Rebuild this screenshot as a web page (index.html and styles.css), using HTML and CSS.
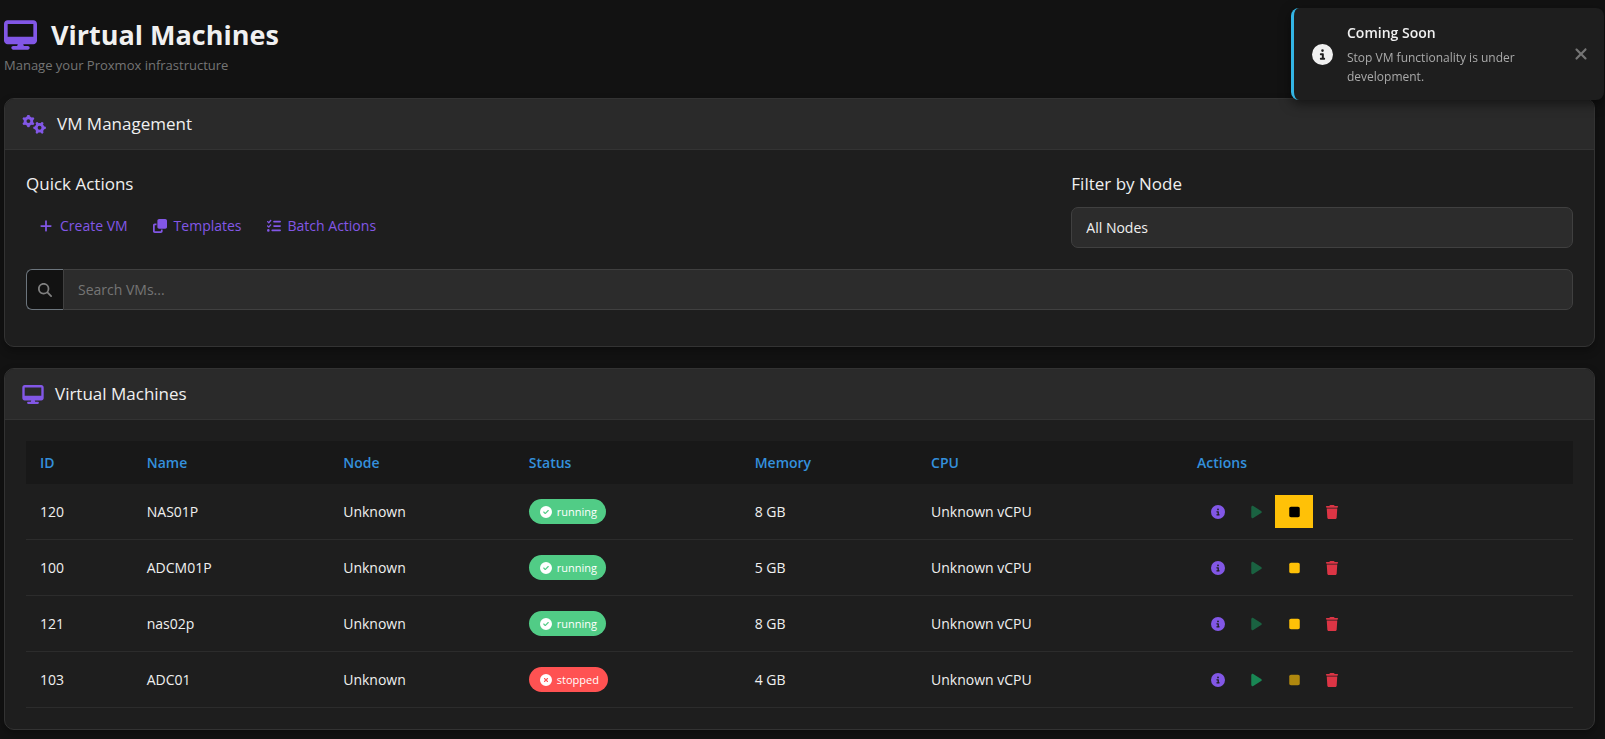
FILE: index.html
```html
<!DOCTYPE html>
<html lang="en">
<head>
<meta charset="utf-8">
<meta name="viewport" content="width=device-width, initial-scale=1">
<title>Virtual Machines</title>
<link rel="stylesheet" href="styles.css">
</head>
<body>
<svg class="sprite" aria-hidden="true">
  <symbol id="desktop" viewBox="0 0 576 512"><path d="M64 0C28.7 0 0 28.7 0 64V352c0 35.3 28.7 64 64 64H240l-10.7 32H160c-17.7 0-32 14.3-32 32s14.3 32 32 32H416c17.7 0 32-14.3 32-32s-14.3-32-32-32H346.7L336 416H512c35.3 0 64-28.7 64-64V64c0-35.3-28.7-64-64-64H64zM512 64V288H64V64H512z"/></symbol>
  <symbol id="gear" viewBox="-100 -100 200 200">
    <circle r="52" fill="none" stroke="currentColor" stroke-width="44"/>
    <g stroke="currentColor" stroke-width="42" stroke-linecap="round">
      <path d="M0-66V-78M0 66V78M57-33L68-39M-57 33L-68 39M57 33L68 39M-57-33L-68-39"/>
    </g>
  </symbol>
  <symbol id="gear-turned" viewBox="-100 -100 200 200">
    <circle r="52" fill="none" stroke="currentColor" stroke-width="44"/>
    <g stroke="currentColor" stroke-width="42" stroke-linecap="round">
      <path d="M-66 0H-78M66 0H78M-33 57L-39 68M33-57L39-68M33 57L39 68M-33-57L-39-68"/>
    </g>
  </symbol>
  <symbol id="gears" viewBox="0 0 640 512">
    <use href="#gear" x="-5" y="-10" width="350" height="350"/>
    <use href="#gear-turned" x="295" y="170" width="350" height="350"/>
  </symbol>
  <symbol id="info" viewBox="0 0 512 512"><path d="M256 512A256 256 0 1 0 256 0a256 256 0 1 0 0 512zM216 336h24V272H216c-13.3 0-24-10.7-24-24s10.7-24 24-24h48c13.3 0 24 10.7 24 24v88h8c13.3 0 24 10.7 24 24s-10.7 24-24 24H216c-13.3 0-24-10.7-24-24s10.7-24 24-24zm40-208a32 32 0 1 1 0 64 32 32 0 1 1 0-64z"/></symbol>
  <symbol id="check" viewBox="0 0 512 512"><path d="M256 512A256 256 0 1 0 256 0a256 256 0 1 0 0 512zM369 209L241 337c-9.4 9.4-24.6 9.4-33.9 0l-64-64c-9.4-9.4-9.4-24.6 0-33.9s24.6-9.4 33.9 0l47 47L335 175c9.4-9.4 24.6-9.4 33.9 0s9.4 24.6 0 33.9z"/></symbol>
  <symbol id="cross" viewBox="0 0 512 512"><path d="M256 512A256 256 0 1 0 256 0a256 256 0 1 0 0 512zM175 175c9.4-9.4 24.6-9.4 33.9 0l47 47 47-47c9.4-9.4 24.6-9.4 33.9 0s9.4 24.6 0 33.9l-47 47 47 47c9.4 9.4 9.4 24.6 0 33.9s-24.6 9.4-33.9 0l-47-47-47 47c-9.4 9.4-24.6 9.4-33.9 0s-9.4-24.6 0-33.9l47-47-47-47c-9.4-9.4-9.4-24.6 0-33.9z"/></symbol>
  <symbol id="play" viewBox="0 0 384 512"><path d="M73 39c-14.8-9.1-33.4-9.4-48.5-.9S0 62.6 0 80V432c0 17.4 9.4 33.4 24.5 41.9s33.7 8.1 48.5-.9L361 297c14.3-8.7 23-24.2 23-41s-8.7-32.2-23-41L73 39z"/></symbol>
  <symbol id="stop" viewBox="0 0 384 512"><path d="M0 128C0 92.7 28.7 64 64 64H320c35.3 0 64 28.7 64 64V384c0 35.3-28.7 64-64 64H64c-35.3 0-64-28.7-64-64V128z"/></symbol>
  <symbol id="trash" viewBox="0 0 448 512"><path d="M135.2 17.7L128 32H32C14.3 32 0 46.3 0 64S14.3 96 32 96H416c17.7 0 32-14.3 32-32s-14.3-32-32-32H320l-7.2-14.3C307.4 6.8 296.3 0 284.2 0H163.8c-12.1 0-23.2 6.8-28.6 17.7zM416 128H32L53.2 467c1.6 25.3 22.6 45 47.9 45H346.9c25.3 0 46.3-19.7 47.9-45L416 128z"/></symbol>
  <symbol id="plus" viewBox="0 0 448 512"><path d="M256 80c0-17.7-14.3-32-32-32s-32 14.3-32 32V224H48c-17.7 0-32 14.3-32 32s14.3 32 32 32H192V432c0 17.7 14.3 32 32 32s32-14.3 32-32V288H400c17.7 0 32-14.3 32-32s-14.3-32-32-32H256V80z"/></symbol>
  <symbol id="clone" viewBox="0 0 512 512"><path d="M288 448H64V224h64V160H64c-35.3 0-64 28.7-64 64V448c0 35.3 28.7 64 64 64H288c35.3 0 64-28.7 64-64V384H288v64zm-64-96H448c35.3 0 64-28.7 64-64V64c0-35.3-28.7-64-64-64H224c-35.3 0-64 28.7-64 64V288c0 35.3 28.7 64 64 64z"/></symbol>
  <symbol id="list" viewBox="0 0 512 512"><path d="M152.1 38.2c9.9 8.9 10.7 24 1.8 33.9l-72 80c-4.4 4.9-10.6 7.8-17.2 7.9s-12.9-2.4-17.6-7L7 113C-2.3 103.6-2.3 88.4 7 79s24.6-9.4 33.9 0l22.1 22.1 55.1-61.2c8.9-9.9 24-10.7 33.9-1.8zm0 160c9.9 8.9 10.7 24 1.8 33.9l-72 80c-4.4 4.9-10.6 7.8-17.2 7.9s-12.9-2.4-17.6-7L7 273c-9.4-9.4-9.4-24.6 0-33.9s24.6-9.4 33.9 0l22.1 22.1 55.1-61.2c8.9-9.9 24-10.7 33.9-1.8zM224 96c0-17.7 14.3-32 32-32H480c17.7 0 32 14.3 32 32s-14.3 32-32 32H256c-17.7 0-32-14.3-32-32zm0 160c0-17.7 14.3-32 32-32H480c17.7 0 32 14.3 32 32s-14.3 32-32 32H256c-17.7 0-32-14.3-32-32zM160 416c0-17.7 14.3-32 32-32H480c17.7 0 32 14.3 32 32s-14.3 32-32 32H192c-17.7 0-32-14.3-32-32zM48 368a48 48 0 1 1 0 96 48 48 0 1 1 0-96z"/></symbol>
  <symbol id="search" viewBox="0 0 512 512"><path d="M416 208c0 45.9-14.9 88.3-40 122.7L502.6 457.4c12.5 12.5 12.5 32.8 0 45.3s-32.8 12.5-45.3 0L330.7 376c-34.4 25.2-76.8 40-122.7 40C93.1 416 0 322.9 0 208S93.1 0 208 0S416 93.1 416 208zM208 352a144 144 0 1 0 0-288 144 144 0 1 0 0 288z"/></symbol>
  <symbol id="close" viewBox="0 0 384 512"><path d="M342.6 150.6c12.5-12.5 12.5-32.8 0-45.3s-32.8-12.5-45.3 0L192 210.7 86.6 105.4c-12.5-12.5-32.8-12.5-45.3 0s-12.5 32.8 0 45.3L146.7 256 41.4 361.4c-12.5 12.5-12.5 32.8 0 45.3s32.8 12.5 45.3 0L192 301.3 297.4 406.6c12.5 12.5 32.8 12.5 45.3 0s12.5-32.8 0-45.3L237.3 256 342.6 150.6z"/></symbol>
</svg>

<main class="page">
  <header class="page-header">
    <h1 class="page-title"><svg class="icon icon-title"><use href="#desktop"/></svg>Virtual Machines</h1>
    <p class="page-subtitle">Manage your Proxmox infrastructure</p>
  </header>

  <section class="card">
    <header class="card-header">
      <svg class="icon icon-gears"><use href="#gears"/></svg>
      <h2 class="card-title">VM Management</h2>
    </header>
    <div class="card-body management">
      <div class="controls">
        <div class="quick">
          <h3 class="section-title">Quick Actions</h3>
          <div class="quick-buttons">
            <button class="link-button" type="button"><svg class="icon icon-button"><use href="#plus"/></svg>Create VM</button>
            <button class="link-button" type="button"><svg class="icon icon-button"><use href="#clone"/></svg>Templates</button>
            <button class="link-button" type="button"><svg class="icon icon-button"><use href="#list"/></svg>Batch Actions</button>
          </div>
        </div>
        <div class="filter">
          <label class="section-title" for="node">Filter by Node</label>
          <select class="field" id="node"><option>All Nodes</option></select>
        </div>
      </div>
      <div class="search">
        <label class="search-icon" for="query" aria-label="Search VMs"><svg class="icon icon-button"><use href="#search"/></svg></label>
        <input class="field search-input" id="query" type="text" placeholder="Search VMs...">
      </div>
    </div>
  </section>

  <section class="card">
    <header class="card-header">
      <svg class="icon icon-card"><use href="#desktop"/></svg>
      <h2 class="card-title">Virtual Machines</h2>
    </header>
    <div class="card-body">
      <table class="vm-table">
        <colgroup><col class="col-id"><col class="col-name"><col class="col-node"><col class="col-status"><col class="col-memory"><col class="col-cpu"><col></colgroup>
        <thead>
          <tr><th>ID</th><th>Name</th><th>Node</th><th>Status</th><th>Memory</th><th>CPU</th><th>Actions</th></tr>
        </thead>
        <tbody>
          <tr>
            <td>120</td><td>NAS01P</td><td>Unknown</td>
            <td><span class="badge running"><svg class="icon icon-badge"><use href="#check"/></svg>running</span></td>
            <td>8 GB</td><td>Unknown vCPU</td>
            <td><div class="actions">
              <button class="action details" type="button" aria-label="Details"><svg class="icon icon-action"><use href="#info"/></svg></button>
              <button class="action start" type="button" aria-label="Start" disabled><svg class="icon icon-small"><use href="#play"/></svg></button>
              <button class="action halt active" type="button" aria-label="Stop"><svg class="icon icon-small"><use href="#stop"/></svg></button>
              <button class="action delete" type="button" aria-label="Delete"><svg class="icon icon-action"><use href="#trash"/></svg></button>
            </div></td>
          </tr>
          <tr>
            <td>100</td><td>ADCM01P</td><td>Unknown</td>
            <td><span class="badge running"><svg class="icon icon-badge"><use href="#check"/></svg>running</span></td>
            <td>5 GB</td><td>Unknown vCPU</td>
            <td><div class="actions">
              <button class="action details" type="button" aria-label="Details"><svg class="icon icon-action"><use href="#info"/></svg></button>
              <button class="action start" type="button" aria-label="Start" disabled><svg class="icon icon-small"><use href="#play"/></svg></button>
              <button class="action halt" type="button" aria-label="Stop"><svg class="icon icon-small"><use href="#stop"/></svg></button>
              <button class="action delete" type="button" aria-label="Delete"><svg class="icon icon-action"><use href="#trash"/></svg></button>
            </div></td>
          </tr>
          <tr>
            <td>121</td><td>nas02p</td><td>Unknown</td>
            <td><span class="badge running"><svg class="icon icon-badge"><use href="#check"/></svg>running</span></td>
            <td>8 GB</td><td>Unknown vCPU</td>
            <td><div class="actions">
              <button class="action details" type="button" aria-label="Details"><svg class="icon icon-action"><use href="#info"/></svg></button>
              <button class="action start" type="button" aria-label="Start" disabled><svg class="icon icon-small"><use href="#play"/></svg></button>
              <button class="action halt" type="button" aria-label="Stop"><svg class="icon icon-small"><use href="#stop"/></svg></button>
              <button class="action delete" type="button" aria-label="Delete"><svg class="icon icon-action"><use href="#trash"/></svg></button>
            </div></td>
          </tr>
          <tr>
            <td>103</td><td>ADC01</td><td>Unknown</td>
            <td><span class="badge stopped"><svg class="icon icon-badge"><use href="#cross"/></svg>stopped</span></td>
            <td>4 GB</td><td>Unknown vCPU</td>
            <td><div class="actions">
              <button class="action details" type="button" aria-label="Details"><svg class="icon icon-action"><use href="#info"/></svg></button>
              <button class="action start" type="button" aria-label="Start"><svg class="icon icon-small"><use href="#play"/></svg></button>
              <button class="action halt" type="button" aria-label="Stop" disabled><svg class="icon icon-small"><use href="#stop"/></svg></button>
              <button class="action delete" type="button" aria-label="Delete"><svg class="icon icon-action"><use href="#trash"/></svg></button>
            </div></td>
          </tr>
        </tbody>
      </table>
    </div>
  </section>
</main>

<aside class="toast" role="status">
  <svg class="icon icon-toast"><use href="#info"/></svg>
  <div class="toast-content">
    <strong class="toast-title">Coming Soon</strong>
    <p class="toast-text">Stop VM functionality is under development.</p>
  </div>
  <button class="toast-close" type="button" aria-label="Close"><svg class="icon icon-close"><use href="#close"/></svg></button>
</aside>
</body>
</html>
```
FILE: styles.css
```css
* { box-sizing: border-box; }

body {
  margin: 0;
  background: #121212;
  color: #f0f0f0;
  font: 14px/21px "Open Sans", "Noto Sans", sans-serif;
}

h1, h2, h3, p { margin: 0; }
button, input, select { font: inherit; }

.sprite { position: absolute; width: 0; height: 0; }
.icon { display: block; flex: none; fill: currentColor; }

.page { padding: 17px 10px 8px 4px; }

.page-header { margin-bottom: 22px; }
.page-title {
  display: flex;
  align-items: center;
  gap: 14px;
  font-size: 27px;
  line-height: 36px;
  font-weight: 700;
}
.page-subtitle { margin-top: 2px; color: #757575; font-size: 13px; }
.icon-title { width: 33px; height: 30px; color: #8257e6; }

.card {
  margin-bottom: 21px;
  border: 1px solid #333;
  border-radius: 10px;
  background: #1e1e1e;
  box-shadow: 0 4px 8px rgba(0, 0, 0, 0.3);
}
.card-header {
  display: flex;
  align-items: center;
  gap: 11px;
  height: 51px;
  padding: 0 17px;
  border-bottom: 1px solid #333;
  border-radius: 9px 9px 0 0;
  background: #2a2a2a;
}
.card-title { font-size: 17px; line-height: 24px; font-weight: 400; }
.icon-gears { width: 24px; height: 19px; color: #8257e6; }
.icon-card { width: 22px; height: 19px; color: #8257e6; }
.card-body { padding: 21px; }

.management { padding-bottom: 36px; }
.controls {
  display: grid;
  grid-template-columns: 2fr 1fr;
  gap: 42px;
  margin-bottom: 21px;
}
.section-title {
  display: block;
  margin-bottom: 11px;
  font-size: 17px;
  line-height: 25px;
  font-weight: 400;
}
.quick-buttons { display: flex; }
.link-button {
  display: flex;
  align-items: center;
  gap: 7px;
  height: 37px;
  padding: 0 12px 0 13px;
  border: 0;
  background: none;
  color: #8257e6;
}
.icon-button { width: 14px; height: 14px; }

.field {
  display: block;
  width: 100%;
  height: 41px;
  padding: 0 14px;
  border: 1px solid #404040;
  border-radius: 7px;
  background: #2c2c2c;
  color: #f0f0f0;
  appearance: none;
}
.field::placeholder { color: #757575; opacity: 1; }
.search { display: flex; }
.search-icon {
  display: flex;
  align-items: center;
  padding: 0 11px;
  border: 1px solid #6c757d;
  border-right: 0;
  border-radius: 6px 0 0 6px;
  background: #121212;
  color: #808080;
}
.search-input { flex: 1; border-radius: 0 7px 7px 0; }

.vm-table { width: 100%; border-collapse: separate; border-spacing: 0; table-layout: fixed; }
.col-id { width: 6.9%; }
.col-name { width: 12.7%; }
.col-node { width: 12%; }
.col-status { width: 14.6%; }
.col-memory { width: 11.4%; }
.col-cpu { width: 17.2%; }
.vm-table th {
  height: 43px;
  padding: 0 14px;
  background: #181818;
  color: #3490dc;
  text-align: left;
  font-weight: 600;
}
.vm-table td { padding: 11px 14px; border-bottom: 1px solid #2c2c2c; }

.badge {
  display: inline-flex;
  align-items: center;
  gap: 5px;
  height: 25px;
  padding: 0 9px 0 11px;
  border-radius: 13px;
  color: #fff;
  font-size: 11px;
  line-height: 16px;
  vertical-align: middle;
}
.running { background: #51cc86; }
.stopped { background: #ff5252; }
.icon-badge { width: 12px; height: 12px; }

.actions { display: flex; padding-left: 2px; }
.action {
  display: flex;
  align-items: center;
  justify-content: center;
  width: 38px;
  height: 33px;
  padding: 0;
  border: 0;
  background: none;
}
.action:disabled { opacity: 0.65; }
.details { color: #8257e6; }
.start { color: #198754; }
.halt { color: #ffc107; }
.delete { color: #dc3545; }
.active { background: #ffc107; color: #000; }
.icon-action { width: 14px; height: 14px; }
.icon-small { width: 11px; height: 14px; }

.toast {
  position: fixed;
  top: 8px;
  right: 1px;
  display: flex;
  align-items: center;
  gap: 14px;
  width: 313px;
  padding: 14px 16px 14px 18px;
  border-left: 3px solid #33b5e5;
  border-radius: 8px;
  background: #1e1e1e;
  box-shadow: 0 4px 12px rgba(0, 0, 0, 0.5);
}
.icon-toast { width: 21px; height: 21px; }
.toast-content { flex: 1; }
.toast-title { display: block; margin-bottom: 5px; font-weight: 600; }
.toast-text { color: #aaa; font-size: 12px; line-height: 19px; }
.toast-close { padding: 0; border: 0; background: none; color: #757575; }
.icon-close { width: 14px; height: 18px; }
```
